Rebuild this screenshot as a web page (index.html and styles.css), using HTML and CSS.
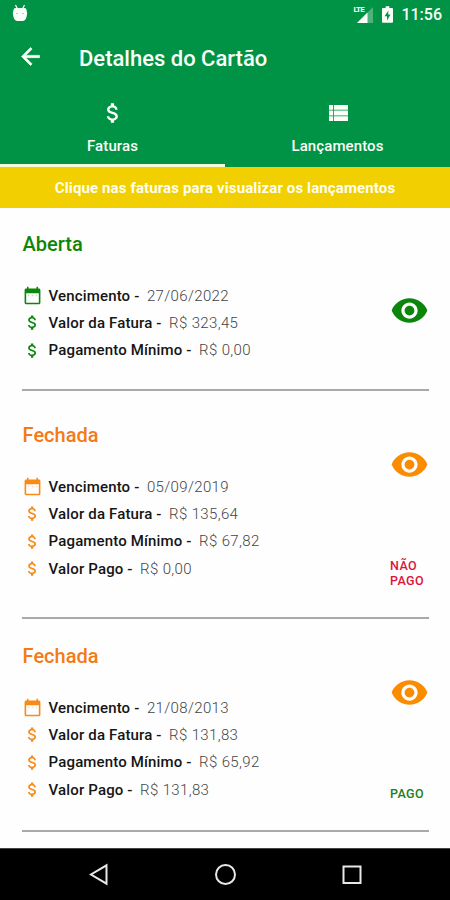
FILE: index.html
```html
<!DOCTYPE html>
<html lang="pt-BR">
<head>
    <meta charset="UTF-8">
    <meta name="viewport" content="width=device-width, initial-scale=1.0">
    <title>Detalhes do Cartão</title>
    <link rel="stylesheet" href="styles.css">
</head>
<body>
    <svg class="sprite">
        <symbol id="dollar" viewBox="0 0 24 24">
            <path d="M11.8 10.9c-2.27-.59-3-1.2-3-2.15 0-1.09 1.01-1.85 2.7-1.85 1.78 0 2.44.85 2.5 2.1h2.21c-.07-1.72-1.12-3.3-3.21-3.81V3h-3v2.16c-1.94.42-3.5 1.68-3.5 3.61 0 2.31 1.91 3.46 4.7 4.13 2.5.6 3 1.48 3 2.41 0 .69-.49 1.79-2.7 1.79-2.06 0-2.87-.92-2.98-2.1h-2.2c.12 2.19 1.76 3.42 3.68 3.83V21h3v-2.15c1.95-.37 3.5-1.5 3.5-3.55 0-2.84-2.43-3.81-4.7-4.4z"/>
        </symbol>
        <symbol id="calendar" viewBox="0 0 24 24">
            <path d="M20 3h-1V1h-2v2H7V1H5v2H4c-1.1 0-2 .9-2 2v16c0 1.1.9 2 2 2h16c1.1 0 2-.9 2-2V5c0-1.1-.9-2-2-2zm0 18H4V9h16v12z"/>
            <path d="M6 11h2v2H6zM11 11h2v2h-2zM16 11h2v2h-2z" opacity=".25"/>
        </symbol>
        <symbol id="eye" viewBox="0 0 24 24">
            <path d="M12 4.5C7 4.5 2.73 7.61 1 12c1.73 4.39 6 7.5 11 7.5s9.27-3.11 11-7.5c-1.73-4.39-6-7.5-11-7.5zM12 17c-2.76 0-5-2.24-5-5s2.24-5 5-5 5 2.24 5 5-2.24 5-5 5zm0-8c-1.66 0-3 1.34-3 3s1.34 3 3 3 3-1.34 3-3-1.34-3-3-3z"/>
        </symbol>
    </svg>

    <header class="header">
        <div class="status-bar">
            <svg class="debug-icon" viewBox="0 0 16 18">
                <path d="M3.5 1l2 4M12.5 1l-2 4" stroke="currentColor" stroke-width="1.2"/>
                <path d="M1.5 6q0-2 2-2h9q2 0 2 2l.7 3.5-.7 3.5q-1 4-4 4h-5q-3 0-4-4L.8 9.5z"/>
                <circle cx="5" cy="9.5" r=".6" fill="#4da873"/>
                <circle cx="11" cy="9.5" r=".6" fill="#4da873"/>
            </svg>
            <div class="status-icons">
                <div class="signal">
                    <span class="lte">LTE</span>
                    <svg viewBox="0 0 16 16">
                        <path d="M16 0v16H0z" opacity=".3"/>
                        <path d="M10.5 5.5V16H0z"/>
                    </svg>
                </div>
                <svg class="battery" viewBox="0 0 12 18">
                    <path d="M4 0h4v2h3q1 0 1 1v14q0 1-1 1H1q-1 0-1-1V3q0-1 1-1h3z"/>
                    <path d="M7 4.5L2.8 11h2.7v4.5L9.3 9H6.7z" fill="#009245"/>
                </svg>
                <span class="clock">11:56</span>
            </div>
        </div>
        <div class="app-bar">
            <svg class="back" viewBox="0 0 24 24">
                <path d="M20 11H7.83l5.59-5.59L12 4l-8 8 8 8 1.41-1.41L7.83 13H20v-2z"/>
            </svg>
            <h1>Detalhes do Cartão</h1>
        </div>
        <nav class="tabs">
            <a class="tab active">
                <svg class="tab-icon"><use href="#dollar"/></svg>
                <span>Faturas</span>
            </a>
            <a class="tab">
                <svg class="tab-icon list" viewBox="0 0 24 24">
                    <path d="M3 4h4.2v4.7H3zM8 4h14v4.7H8zM3 9.5h4.2v4.9H3zM8 9.5h14v4.9H8zM3 15.2h4.2V20H3zM8 15.2h14V20H8z"/>
                </svg>
                <span>Lançamentos</span>
            </a>
        </nav>
    </header>

    <div class="notice">Clique nas faturas para visualizar os lançamentos</div>

    <main>
        <section class="invoice open">
            <div class="info">
                <h2>Aberta</h2>
                <ul>
                    <li><svg><use href="#calendar"/></svg><b>Vencimento -</b><span>27/06/2022</span></li>
                    <li><svg><use href="#dollar"/></svg><b>Valor da Fatura -</b><span>R$ 323,45</span></li>
                    <li><svg><use href="#dollar"/></svg><b>Pagamento Mínimo -</b><span>R$ 0,00</span></li>
                </ul>
            </div>
            <div class="side">
                <svg class="eye"><use href="#eye"/></svg>
            </div>
        </section>

        <section class="invoice unpaid">
            <div class="info">
                <h2>Fechada</h2>
                <ul>
                    <li><svg><use href="#calendar"/></svg><b>Vencimento -</b><span>05/09/2019</span></li>
                    <li><svg><use href="#dollar"/></svg><b>Valor da Fatura -</b><span>R$ 135,64</span></li>
                    <li><svg><use href="#dollar"/></svg><b>Pagamento Mínimo -</b><span>R$ 67,82</span></li>
                    <li><svg><use href="#dollar"/></svg><b>Valor Pago -</b><span>R$ 0,00</span></li>
                </ul>
            </div>
            <div class="side">
                <svg class="eye"><use href="#eye"/></svg>
                <p class="payment">NÃO<br>PAGO</p>
            </div>
        </section>

        <section class="invoice paid">
            <div class="info">
                <h2>Fechada</h2>
                <ul>
                    <li><svg><use href="#calendar"/></svg><b>Vencimento -</b><span>21/08/2013</span></li>
                    <li><svg><use href="#dollar"/></svg><b>Valor da Fatura -</b><span>R$ 131,83</span></li>
                    <li><svg><use href="#dollar"/></svg><b>Pagamento Mínimo -</b><span>R$ 65,92</span></li>
                    <li><svg><use href="#dollar"/></svg><b>Valor Pago -</b><span>R$ 131,83</span></li>
                </ul>
            </div>
            <div class="side">
                <svg class="eye"><use href="#eye"/></svg>
                <p class="payment">PAGO</p>
            </div>
        </section>
    </main>

    <footer class="nav-bar">
        <svg viewBox="0 0 24 24"><path d="M19.5 2.3v18.4L4 11.5z"/></svg>
        <svg viewBox="0 0 24 24"><circle cx="11.5" cy="11.5" r="9.5"/></svg>
        <svg viewBox="0 0 24 24"><rect x="3.5" y="3.5" width="17" height="16.5"/></svg>
    </footer>
</body>
</html>
```

FILE: styles.css
```css
* {
    box-sizing: border-box;
}
body {
    font-family: Roboto, sans-serif;
    margin: 0;
    height: 900px;
    display: flex;
    flex-direction: column;
    background-color: #fefefe;
    overflow: hidden;
}
svg {
    fill: currentColor;
    flex: none;
}
.sprite {
    display: none;
}
.header {
    background-color: #009245;
    color: #fafff8;
    height: 167px;
}
.status-bar {
    height: 28px;
    padding: 0 8px 0 12px;
    display: flex;
    justify-content: space-between;
    align-items: center;
}
.debug-icon {
    width: 16px;
    height: 18px;
    margin-top: -3px;
}
.status-icons {
    display: flex;
    align-items: center;
}
.signal {
    display: flex;
    position: relative;
    width: 20px;
    height: 18px;
    justify-content: flex-end;
    align-items: flex-end;
}
.signal svg {
    width: 16px;
    height: 16px;
}
.lte {
    position: absolute;
    left: 0;
    top: 1px;
    font-size: 8px;
    line-height: 7px;
    font-weight: bold;
    letter-spacing: -0.8px;
    background-color: #009245;
}
.battery {
    width: 11px;
    height: 17px;
    margin: 0 8px 0 9px;
}
.clock {
    font-size: 16px;
    font-weight: 500;
}
.app-bar {
    height: 60px;
    padding-left: 17px;
    display: flex;
    align-items: center;
}
.back {
    width: 27px;
    height: 27px;
    margin-top: -3px;
    stroke: currentColor;
    stroke-width: 0.6;
}
.app-bar h1 {
    margin: 0 0 0 35px;
    font-size: 22px;
    font-weight: 500;
}
.tabs {
    display: flex;
    height: 79px;
}
.tab {
    flex: 1;
    display: flex;
    flex-direction: column;
    align-items: center;
    padding-top: 12px;
    font-size: 15px;
    font-weight: 500;
    letter-spacing: 0.1px;
    border-bottom: 3px solid transparent;
}
.tab.active {
    border-bottom-color: #f6fbdc;
}
.tab-icon {
    width: 26px;
    height: 26px;
    margin-bottom: 11px;
}
.tab-icon.list {
    width: 24px;
}
.notice {
    height: 41px;
    line-height: 42px;
    text-align: center;
    background-color: #f1cf00;
    color: #fffef0;
    font-size: 15px;
    font-weight: 700;
    letter-spacing: 0.12px;
}
main {
    flex: 1;
    padding: 0 21px 0 22px;
}
.invoice {
    display: flex;
    justify-content: space-between;
    border-bottom: 2px solid #a9a9a9;
}
.info {
    padding-left: 0.6px;
}
.invoice h2 {
    margin: 0;
    font-size: 20px;
    line-height: 24px;
    font-weight: 500;
    color: #f57a16;
}
.invoice ul {
    list-style: none;
    margin: 26px 0 0;
    padding: 0;
}
.invoice li {
    display: flex;
    align-items: center;
    height: 27.3px;
    font-size: 15px;
    color: #444;
}
.invoice li svg {
    width: 19px;
    height: 19px;
    margin-right: 7px;
    color: #f98a16;
}
.invoice li b {
    font-weight: 500;
    color: #151515;
    letter-spacing: 0.15px;
    margin-right: 7.5px;
}
.invoice li span {
    font-weight: 300;
    letter-spacing: 0.35px;
}
.side {
    width: 39px;
}
.eye {
    display: block;
    width: 39px;
    height: 39px;
    color: #fb8c00;
}
.payment {
    margin: 0;
    font-size: 12.5px;
    line-height: 15px;
    font-weight: 500;
    letter-spacing: 0.4px;
}
.open {
    height: 183px;
    padding-top: 24px;
}
.open h2,
.open li svg,
.open .eye {
    color: #0b860b;
}
.open .eye {
    margin-top: 59px;
}
.unpaid {
    height: 228px;
    padding-top: 32px;
}
.unpaid .eye {
    margin-top: 22px;
}
.unpaid .payment {
    margin-top: 74px;
    color: #dc143c;
}
.paid {
    height: 213px;
    padding-top: 25px;
}
.paid .eye {
    margin-top: 29px;
}
.paid .payment {
    margin-top: 74px;
    color: #1b8020;
}
.nav-bar {
    height: 52px;
    background-color: #000;
    color: #e8e8e8;
    display: flex;
    justify-content: space-between;
    align-items: center;
    padding: 0 86px 0 87px;
    border-top: 1px solid #444;
}
.nav-bar svg {
    width: 24px;
    height: 24px;
    fill: none;
    stroke: currentColor;
    stroke-width: 2;
}
```
